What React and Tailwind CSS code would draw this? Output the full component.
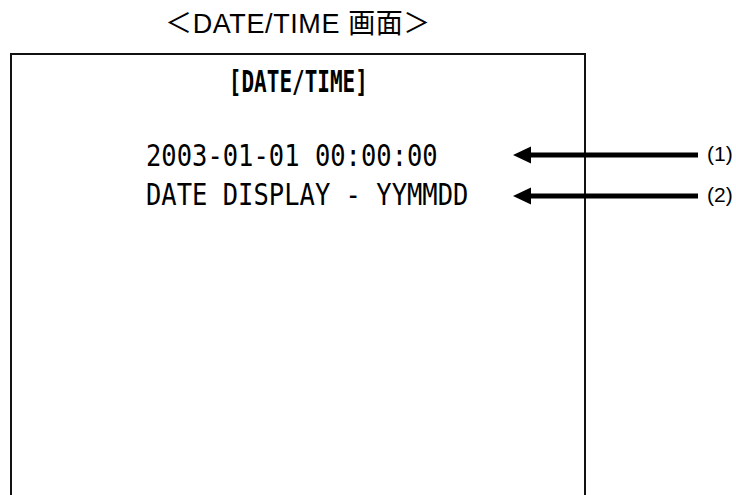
import React from "react";

function Arrow({ top }) {
  return (
    <svg
      className="absolute left-[513px]"
      style={{ top }}
      width="185"
      height="18"
      viewBox="0 0 185 18"
    >
      <polygon points="0,9 18,0.5 18,17.5" fill="#000" />
      <rect x="14" y="6.5" width="171" height="5" fill="#000" />
    </svg>
  );
}

export default function App() {
  return (
    <div className="relative w-[736px] h-[495px] overflow-hidden bg-white">
      <div className="flex flex-col w-[576px] ml-[10px]">
        <div className="h-[53px] flex items-start justify-center pt-[11px] text-[27px] leading-[27px] text-black font-['Liberation_Sans','Noto_Sans_CJK_JP',sans-serif] tracking-[0.6px]">
          <span>＜DATE/TIME 画面＞</span>
        </div>
        <div className="h-[460px] border-2 border-[#111] flex flex-col font-['DejaVu_Sans_Mono',monospace] text-[30px] leading-[30px] text-black">
          <div className="flex justify-center pt-[12px]">
            <span className="inline-block font-bold scale-x-[0.7] origin-center">[DATE/TIME]</span>
          </div>
          <div className="flex flex-col pl-[134px] pt-[44px] gap-[9px]">
            <span className="inline-block scale-x-[0.85] origin-left whitespace-pre">2003-01-01 00:00:00</span>
            <span className="inline-block scale-x-[0.85] origin-left whitespace-pre">DATE DISPLAY - YYMMDD</span>
          </div>
        </div>
      </div>
      <Arrow top="146px" />
      <Arrow top="187px" />
      <div className="absolute left-[707px] top-[142px] text-[21px] leading-[24px] font-['Liberation_Sans',sans-serif] text-black">(1)</div>
      <div className="absolute left-[707px] top-[183px] text-[21px] leading-[24px] font-['Liberation_Sans',sans-serif] text-black">(2)</div>
    </div>
  );
}
